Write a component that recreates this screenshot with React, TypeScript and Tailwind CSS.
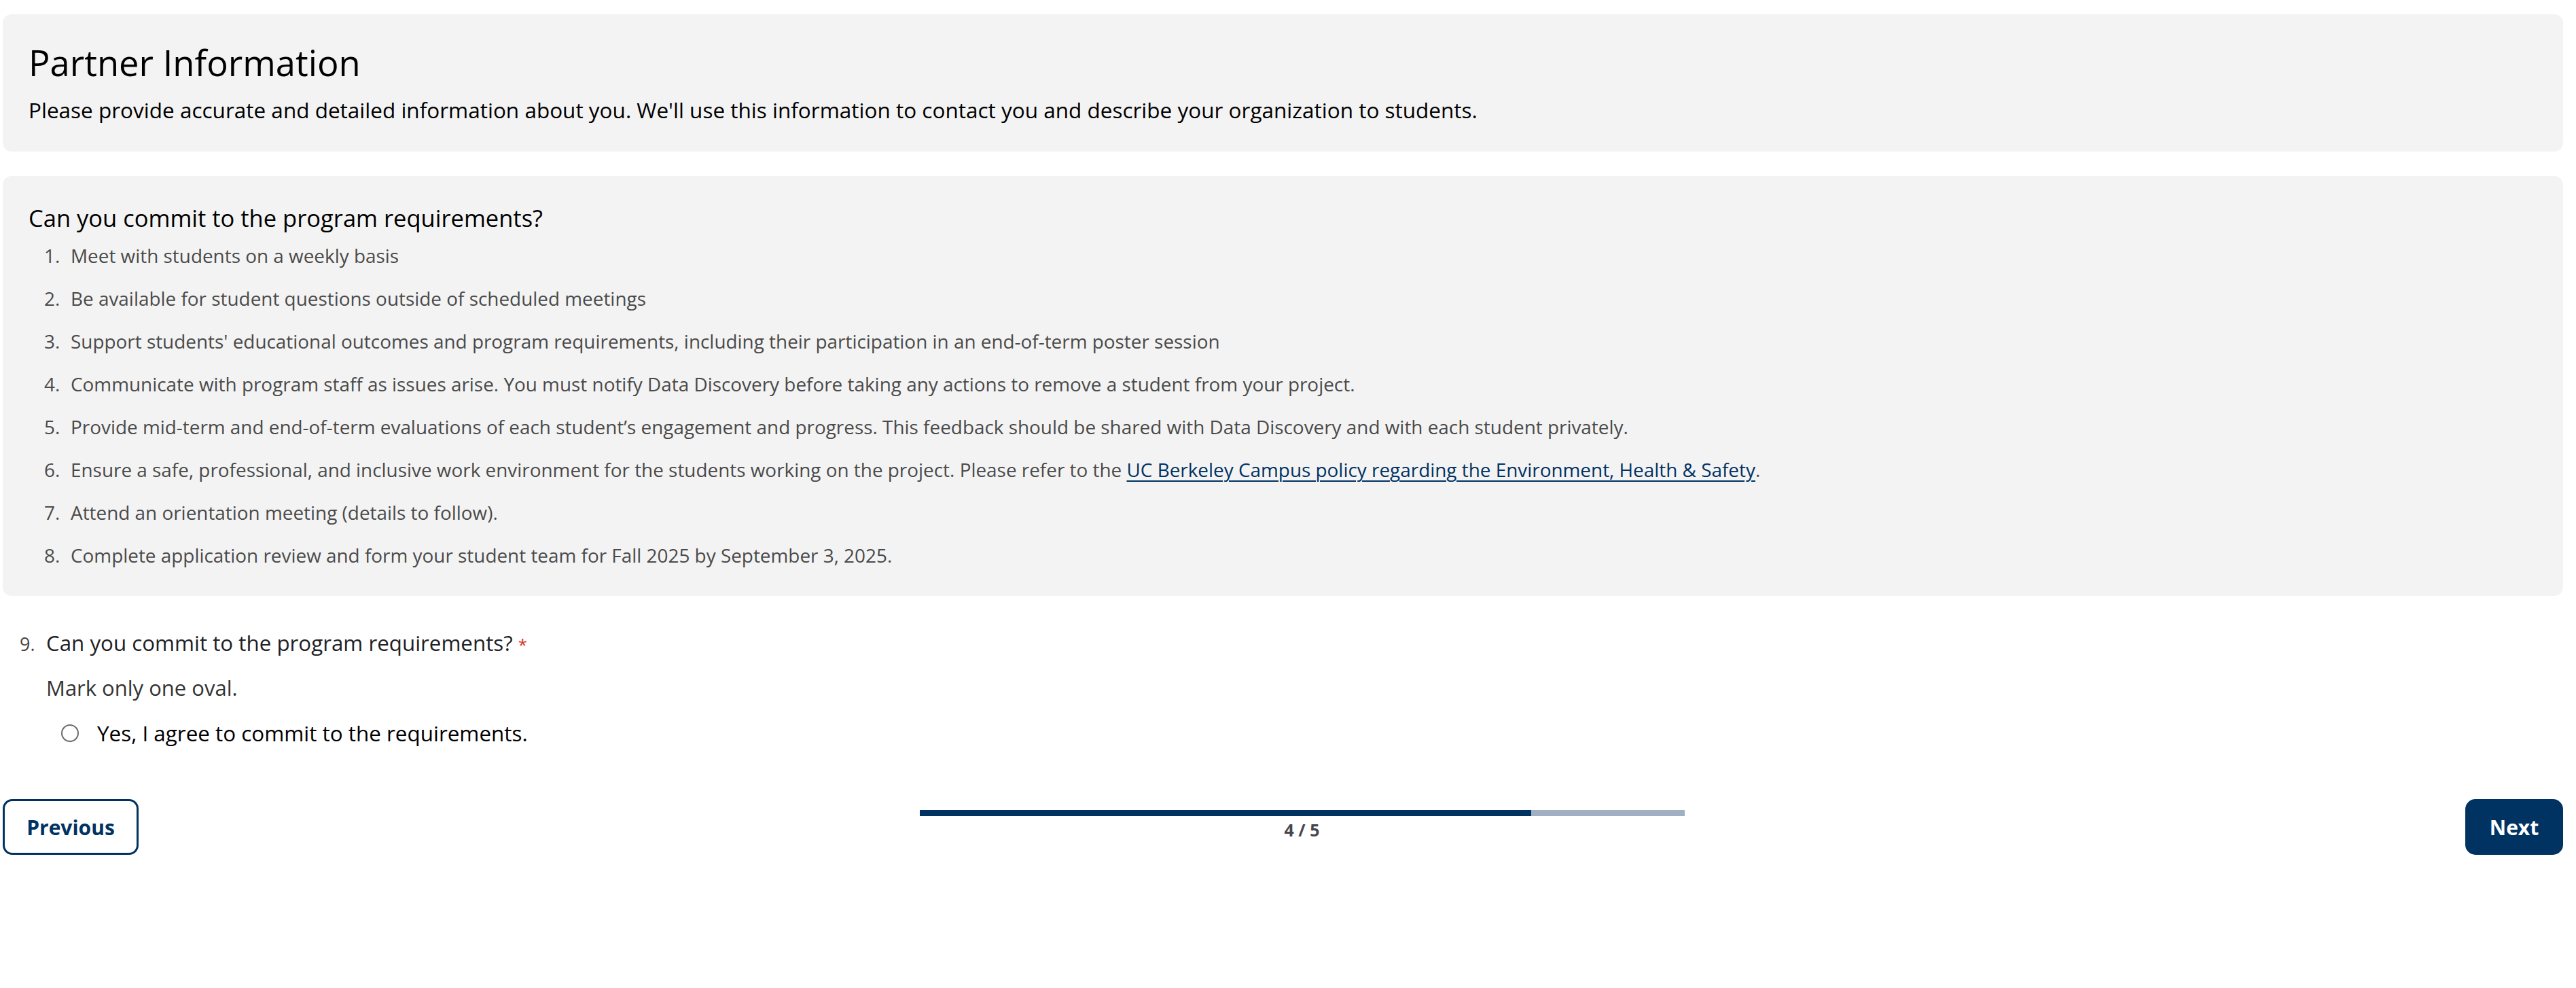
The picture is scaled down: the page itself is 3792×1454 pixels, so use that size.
import React from "react";

const items: React.ReactNode[] = [
  "Meet with students on a weekly basis",
  "Be available for student questions outside of scheduled meetings",
  "Support students' educational outcomes and program requirements, including their participation in an end-of-term poster session",
  "Communicate with program staff as issues arise. You must notify Data Discovery before taking any actions to remove a student from your project.",
  "Provide mid-term and end-of-term evaluations of each student\u2019s engagement and progress. This feedback should be shared with Data Discovery and with each student privately.",
  <>
    Ensure a safe, professional, and inclusive work environment for the students working on the project. Please refer to the{" "}
    <a href="#" className="text-[#003262] underline underline-offset-[5px] decoration-[2px]">
      UC Berkeley Campus policy regarding the Environment, Health &amp; Safety
    </a>
    .
  </>,
  "Attend an orientation meeting (details to follow).",
  "Complete application review and form your student team for Fall 2025 by September 3, 2025.",
];

export default function App() {
  return (
    <div className="min-h-screen w-full bg-white pl-[4px] pr-[19px] font-['Open_Sans','Noto_Sans',sans-serif] text-black">
      {/* Header card */}
      <div className="mt-[21px] rounded-[13px] bg-[#f3f3f3] pl-[38px] pr-[38px] pt-[38px] pb-[37px]">
        <h1 className="text-[52.5px] leading-[65px] font-normal">Partner Information</h1>
        <p className="mt-[14px] text-[31.5px] leading-[48px]">
          Please provide accurate and detailed information about you. We'll use this information to contact you and describe your organization to students.
        </p>
      </div>

      {/* Requirements card */}
      <div className="mt-[36px] rounded-[13px] bg-[#f3f3f3] pl-[38px] pr-[38px] pt-[38px] pb-[36px]">
        <h2 className="text-[34.5px] leading-[47px] font-normal">Can you commit to the program requirements?</h2>
        <ol className="mt-[9px] flex flex-col gap-[16px]">
          {items.map((it, i) => (
            <li key={i} className="flex pl-[23px] text-[27.9px] leading-[47px] text-[#4a4a4a]">
              <span className="w-[39px] shrink-0">{i + 1}.</span>
              <span>{it}</span>
            </li>
          ))}
        </ol>
      </div>

      {/* Question 9 */}
      <div className="mt-[45px] pl-[25px]">
        <div className="flex items-baseline">
          <span className="w-[39px] shrink-0 text-[27px] leading-[48px] text-[#444]">9.</span>
          <span className="text-[31.3px] leading-[48px] text-[#202124]">
            Can you commit to the program requirements? <span className="text-[24px] text-[#d93025]">*</span>
          </span>
        </div>
        <div className="mt-[15px] pl-[39px] text-[31px] leading-[48px] text-[#333]">Mark only one oval.</div>
        <label className="mt-[19px] flex items-center pl-[61px]">
          <span className="h-[26px] w-[26px] shrink-0 rounded-full border-[2px] border-[#6b6b6b] bg-white" />
          <span className="ml-[27px] text-[31.4px] leading-[47px] text-black">Yes, I agree to commit to the requirements.</span>
        </label>
      </div>

      {/* Navigation */}
      <div className="mt-[74px] flex items-start justify-between">
        <button className="h-[82px] w-[200px] rounded-[14px] border-[3px] border-[#003262] bg-white text-[30px] font-bold text-[#003262]">
          Previous
        </button>
        <div className="flex w-[1126px] flex-col items-center pt-[16px]">
          <div className="h-[9px] w-full bg-[#a0b0c2]">
            <div className="h-full w-[80%] bg-[#003262]" />
          </div>
          <div className="mt-[1px] text-[25px] font-bold leading-[39px] text-[#46464f]">4 / 5</div>
        </div>
        <button className="h-[82px] w-[144px] rounded-[15px] bg-[#003262] text-[30px] font-bold text-white">
          Next
        </button>
      </div>
    </div>
  );
}
